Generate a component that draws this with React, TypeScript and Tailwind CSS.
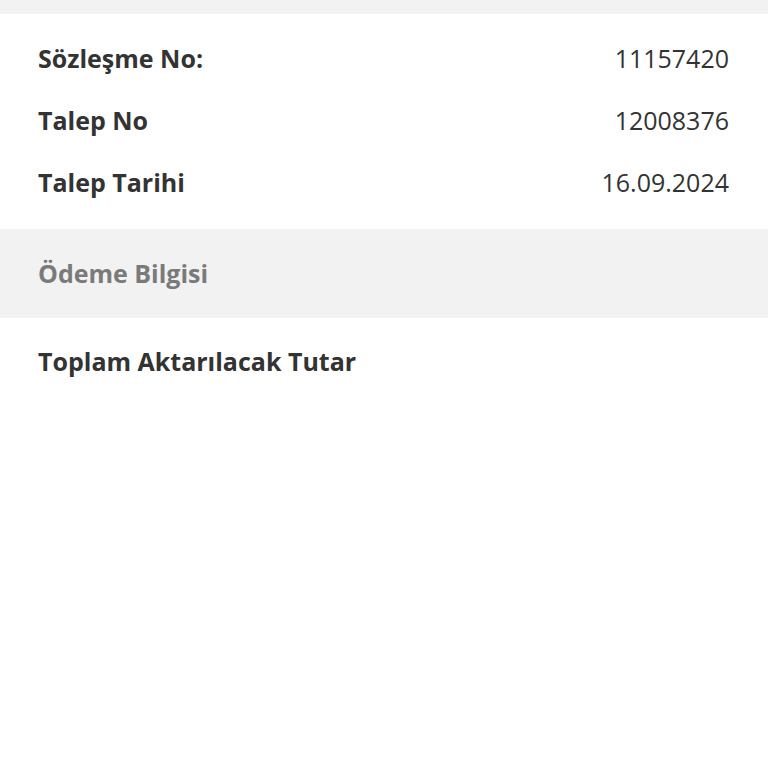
const rows = [
  { label: 'Sözleşme No:', value: '11157420' },
  { label: 'Talep No', value: '12008376' },
  { label: 'Talep Tarihi', value: '16.09.2024' },
];

export default function App() {
  return (
    <div className="min-h-screen bg-white text-[#333333] font-['Open_Sans','Noto_Sans',sans-serif]">
      <div className="h-[14px] bg-[#f2f2f2]" />

      {/* Request details */}
      <div className="pt-[14px] pb-[15px] pl-[38px] pr-[39px]">
        {rows.map((row) => (
          <div key={row.label} className="flex h-[62px] items-center justify-between text-[25px]">
            <span className="font-bold">{row.label}</span>
            <span>{row.value}</span>
          </div>
        ))}
      </div>

      {/* Section header */}
      <div className="flex h-[89px] items-center bg-[#f2f2f2] pl-[38px]">
        <span className="text-[25px] font-bold text-[#7a7a7a]">Ödeme Bilgisi</span>
      </div>

      <div className="pt-[13px] pl-[38px] pr-[39px]">
        <div className="flex h-[62px] items-center text-[25px]">
          <span className="font-bold">Toplam Aktarılacak Tutar</span>
        </div>
      </div>
    </div>
  );
}
